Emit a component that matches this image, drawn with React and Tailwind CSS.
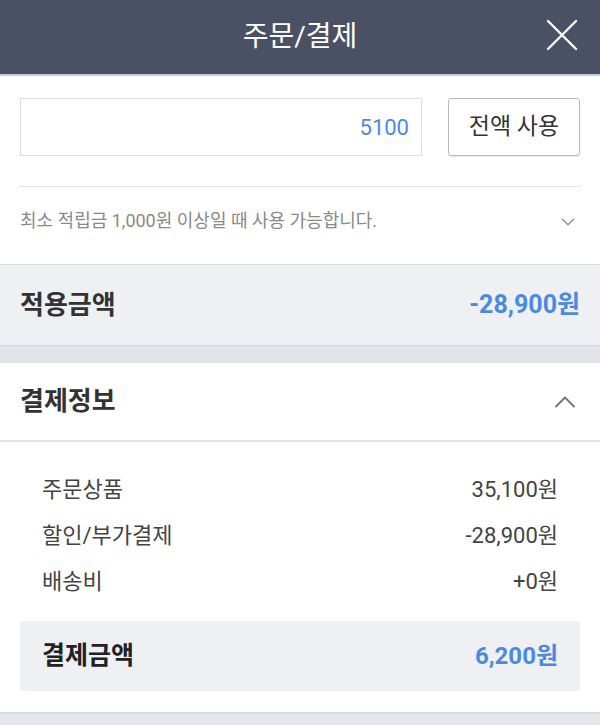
import { ChevronDown, ChevronUp } from "lucide-react";

const font = { fontFamily: "Roboto, 'Noto Sans CJK KR', sans-serif" };

// Header bar with title and close button
function Header() {
  return (
    <div className="relative flex h-[76px] items-center justify-center bg-[#4b5165] border-b-2 border-[#c9ccd4]">
      <h1 className="text-[28px] text-white font-normal">주문/결제</h1>
      <button className="absolute right-[22px] top-[19px] text-white">
        <svg width="32" height="32" viewBox="0 0 32 32" fill="none" stroke="currentColor" strokeWidth="2.4" strokeLinecap="round">
          <path d="M2 2L30 30M30 2L2 30" />
        </svg>
      </button>
    </div>
  );
}

function PointInput() {
  return (
    <div className="bg-white px-5 pt-[22px]">
      <div className="flex gap-[26px]">
        <div className="flex h-[58px] flex-1 items-center justify-end border border-[#dedede] pr-3">
          <span className="text-[22px] text-[#4a8ae3]">5100</span>
        </div>
        <button className="h-[58px] w-[132px] rounded-[3px] border border-[#b9b9b9] text-[23px] text-[#333] shadow-[0_1px_1px_rgba(0,0,0,0.08)]">
          전액 사용
        </button>
      </div>
      <div className="mt-[30px] border-t border-dotted border-[#cfcfcf]" />
      <div className="flex h-[77px] items-start justify-between pt-[22px]">
        <span className="text-[18px] leading-[24px] text-[#8a8a8a]">최소 적립금 1,000원 이상일 때 사용 가능합니다.</span>
        <ChevronDown className="mr-[1px] mt-[2px] text-[#8e8e8e]" size={22} strokeWidth={1.3} />
      </div>
    </div>
  );
}

function AppliedAmount() {
  return (
    <div className="flex h-[81px] items-center justify-between border-t border-[#d9dbe0] bg-[#eef0f4] px-5">
      <span className="text-[26px] font-bold text-[#333]">적용금액</span>
      <span className="text-[25px] font-bold text-[#4a8ae3]">-28,900원</span>
    </div>
  );
}

const rows = [
  ["주문상품", "35,100원"],
  ["할인/부가결제", "-28,900원"],
  ["배송비", "+0원"],
];

function PaymentInfo() {
  return (
    <div className="bg-white">
      <div className="flex h-[79px] items-center justify-between border-b-2 border-[#e3e3e3] px-5">
        <span className="text-[26px] font-bold text-[#333]">결제정보</span>
        <ChevronUp className="-mr-[3px] mt-[1px] text-[#777]" size={36} strokeWidth={1.3} />
      </div>
      <div className="px-[42px] pt-[24px]">
        {rows.map(([label, value]) => (
          <div key={label} className="flex h-[46px] items-center justify-between text-[22px] text-[#444]">
            <span>{label}</span>
            <span>{value}</span>
          </div>
        ))}
      </div>
      <div className="mx-5 mt-[17px] flex h-[70px] items-center justify-between bg-[#eef0f4] px-[22px]">
        <span className="text-[25px] font-bold text-[#222]">결제금액</span>
        <span className="text-[24px] font-bold text-[#4a8ae3]">6,200원</span>
      </div>
      <div className="h-[21px]" />
    </div>
  );
}

export default function App() {
  return (
    <div className="min-h-[725px] w-[600px] bg-[#e4e6eb]" style={font}>
      <Header />
      <PointInput />
      <AppliedAmount />
      <div className="h-[18px] border-t border-[#d5d7dc] bg-[#e2e4e9]" />
      <PaymentInfo />
      <div className="border-t-2 border-[#d8dadf]" />
    </div>
  );
}
